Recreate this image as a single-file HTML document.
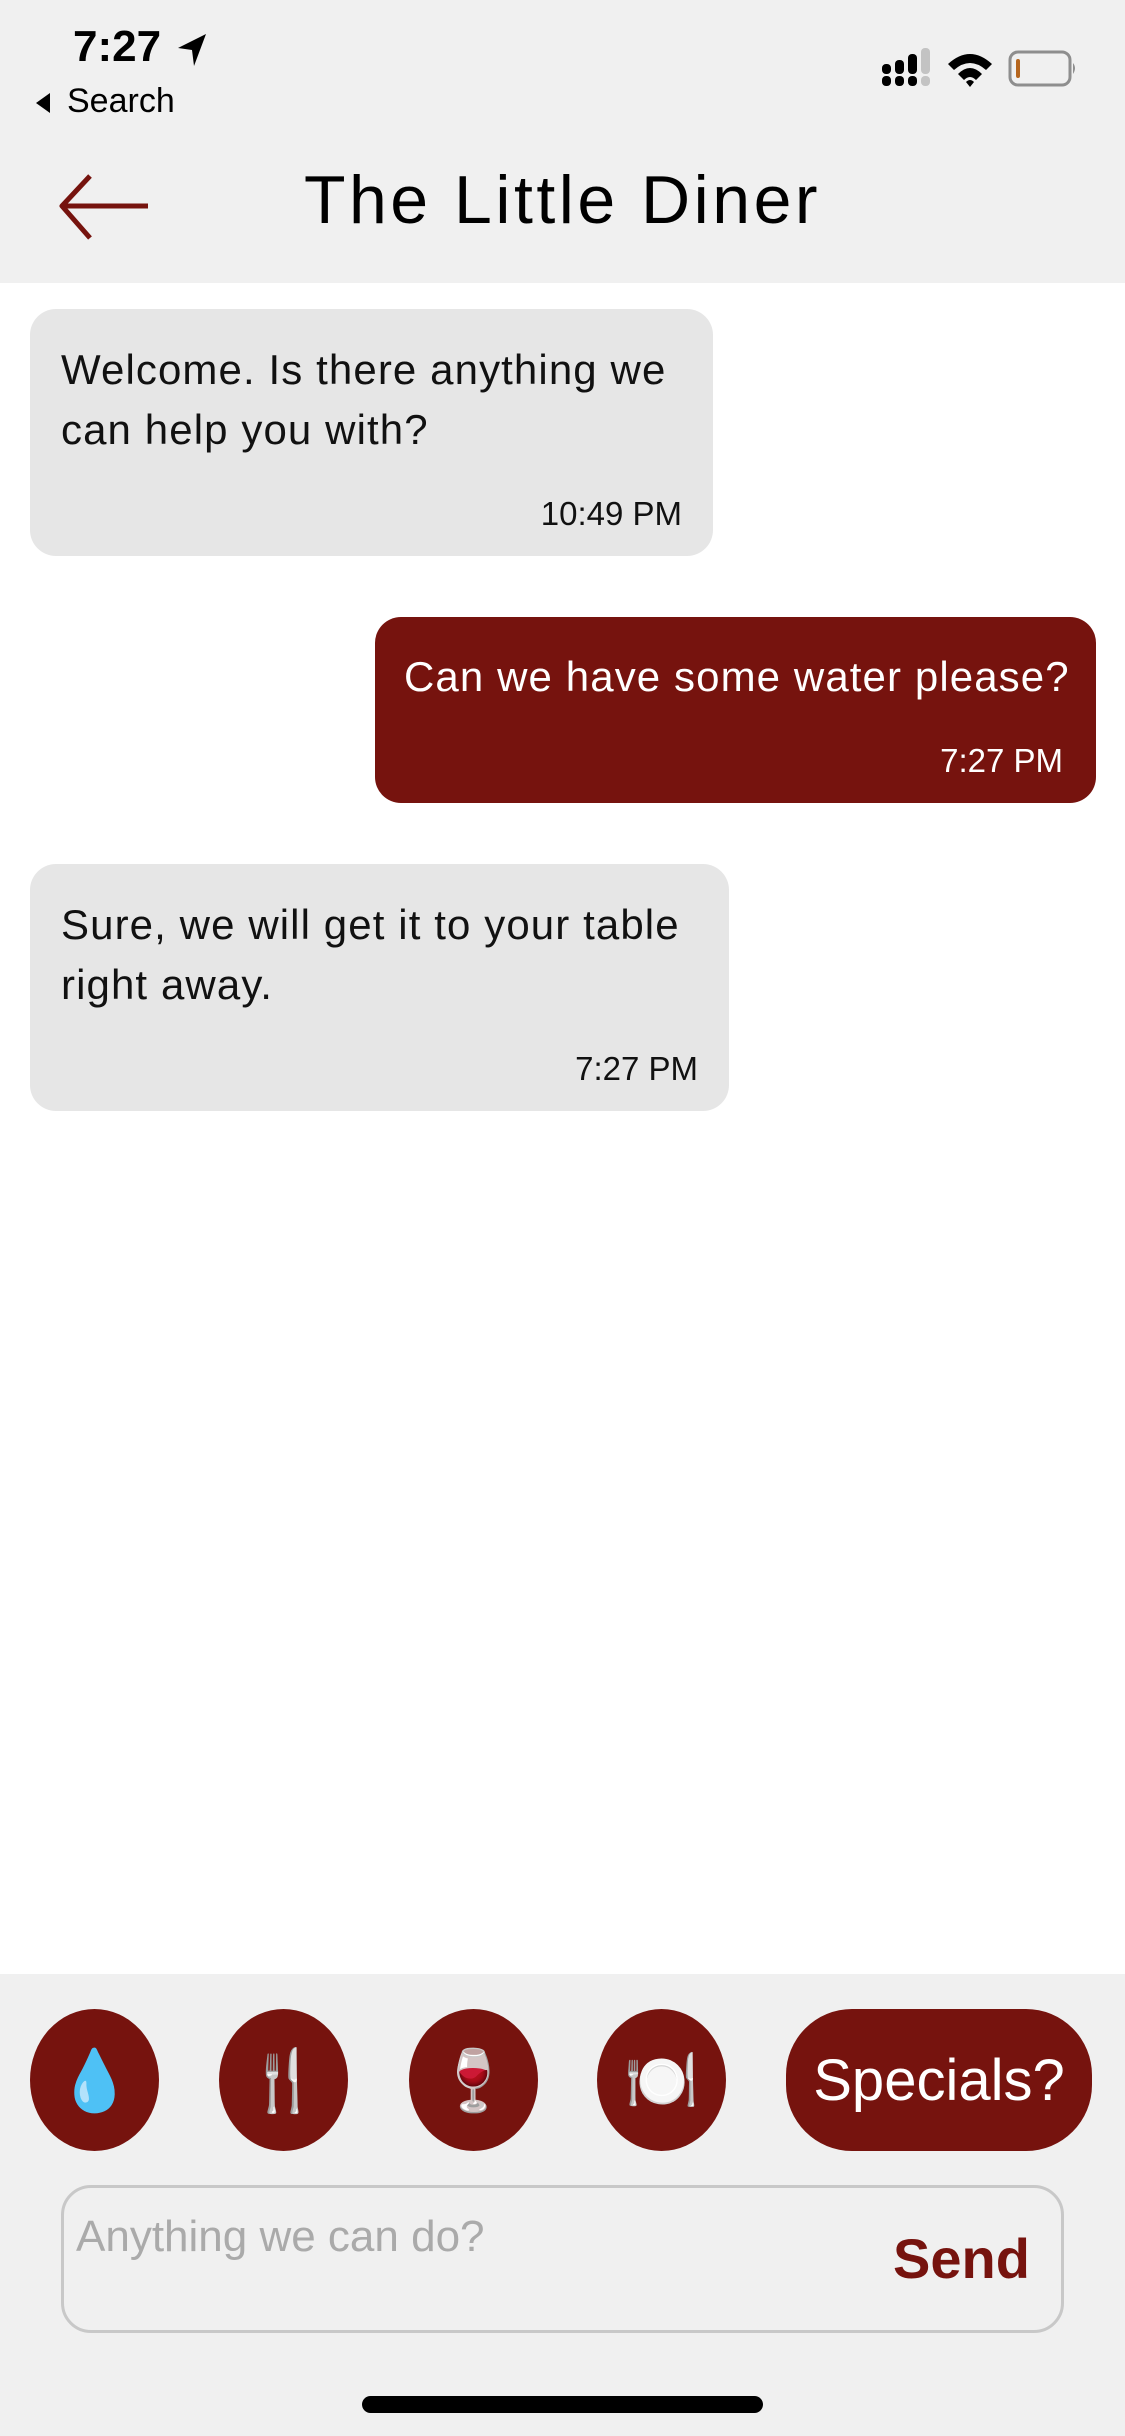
<!DOCTYPE html>
<html><head><meta charset="utf-8"><style>
*{margin:0;padding:0;box-sizing:border-box}
body{width:1125px;height:2436px;position:relative;background:#fff;font-family:"Liberation Sans",sans-serif;overflow:hidden}
.a{position:absolute}
.hdr{left:0;top:0;width:1125px;height:283px;background:#f0f0f0}
.bub{border-radius:26px}
.g{background:#e6e6e6;color:#111}
.r{background:#76130e;color:#fff}
.t{position:absolute;font-size:42px;line-height:60px;white-space:nowrap;letter-spacing:1.1px}
.tm{position:absolute;font-size:33px;white-space:nowrap;line-height:40px}
.btn{background:#76130e;top:2009px;height:142px;border-radius:50%;display:flex;align-items:center;justify-content:center;font-size:60px}
</style></head><body>
<div class="a hdr"></div>
<div class="a" style="left:73px;top:22px;font-size:44px;font-weight:bold;color:#000">7:27</div>
<svg class="a" style="left:176px;top:32px" width="32" height="36" viewBox="0 0 32 36"><path d="M30 2 L2 16 L16 18 L18 34 Z" fill="#000"/></svg>
<svg class="a" style="left:32px;top:91px" width="20" height="24"><path d="M18 2 L4 12 L18 22Z" fill="#000"/></svg>
<div class="a" style="left:67px;top:82px;font-size:34px;color:#000">Search</div>
<svg class="a" style="left:880px;top:48px" width="52" height="40"><g fill="#000"><rect x="2" y="16" width="9" height="10" rx="4"/><rect x="2" y="28" width="9" height="10" rx="4"/><rect x="15" y="12" width="9" height="14" rx="4"/><rect x="15" y="28" width="9" height="10" rx="4"/><rect x="28" y="6" width="9" height="20" rx="4"/><rect x="28" y="28" width="9" height="10" rx="4"/></g><g fill="#c3c3c3"><rect x="41" y="0" width="9" height="26" rx="4"/><rect x="41" y="28" width="9" height="10" rx="4"/></g></svg>
<svg class="a" style="left:945px;top:50px" width="50" height="38" viewBox="0 0 50 38"><path d="M3 14 Q25 -6 47 14 L41 20 Q25 6 9 20Z M13 24 Q25 12 37 24 L31 30 Q25 24 19 30Z M21 32 L25 37 L29 32 Q25 28 21 32Z" fill="#000"/></svg>
<svg class="a" style="left:1008px;top:50px" width="70" height="38"><rect x="2" y="2" width="60" height="33" rx="8" fill="none" stroke="#8e8e8e" stroke-width="3"/><rect x="8" y="9" width="4" height="19" rx="2" fill="#b5651d"/><path d="M65 13 Q69 18 65 24Z" fill="#8e8e8e"/></svg>
<svg class="a" style="left:56px;top:172px" width="100" height="70"><path d="M92 34 H6 M34 4 L6 34 L34 66" fill="none" stroke="#76130e" stroke-width="5" stroke-linejoin="round"/></svg>
<div class="a" style="left:0;width:1125px;top:161px;text-align:center;font-size:68px;letter-spacing:3.5px;color:#000">The Little Diner</div>

<div class="a bub g" style="left:30px;top:309px;width:683px;height:247px"></div>
<div class="t" style="left:61px;top:340px;color:#111">Welcome. Is there anything we<br>can help you with?</div>
<div class="tm" style="right:443px;top:494px;color:#111">10:49 PM</div>

<div class="a bub r" style="left:375px;top:617px;width:721px;height:186px"></div>
<div class="t" style="left:404px;top:647px;color:#fff">Can we have some water please?</div>
<div class="tm" style="right:62px;top:741px;color:#fff">7:27 PM</div>

<div class="a bub g" style="left:30px;top:864px;width:699px;height:247px"></div>
<div class="t" style="left:61px;top:895px;color:#111">Sure, we will get it to your table<br>right away.</div>
<div class="tm" style="right:427px;top:1049px;color:#111">7:27 PM</div>

<div class="a" style="left:0;top:1974px;width:1125px;height:462px;background:#f0f0f0"></div>
<div class="a btn" style="left:30px;width:129px">💧</div>
<div class="a btn" style="left:219px;width:129px">🍴</div>
<div class="a btn" style="left:409px;width:129px">🍷</div>
<div class="a btn" style="left:597px;width:129px">🍽️</div>
<div class="a btn" style="left:786px;width:306px;border-radius:66px;color:#fff;font-size:58px">Specials?</div>
<div class="a" style="left:61px;top:2185px;width:1003px;height:148px;border:3px solid #c8c8c8;border-radius:30px"></div>
<div class="a" style="left:76px;top:2212px;font-size:44px;color:#aaa">Anything we can do?</div>
<div class="a" style="left:893px;top:2226px;font-size:56px;font-weight:bold;color:#76130e">Send</div>
<div class="a" style="left:362px;top:2396px;width:401px;height:17px;border-radius:9px;background:#000"></div>
</body></html>
